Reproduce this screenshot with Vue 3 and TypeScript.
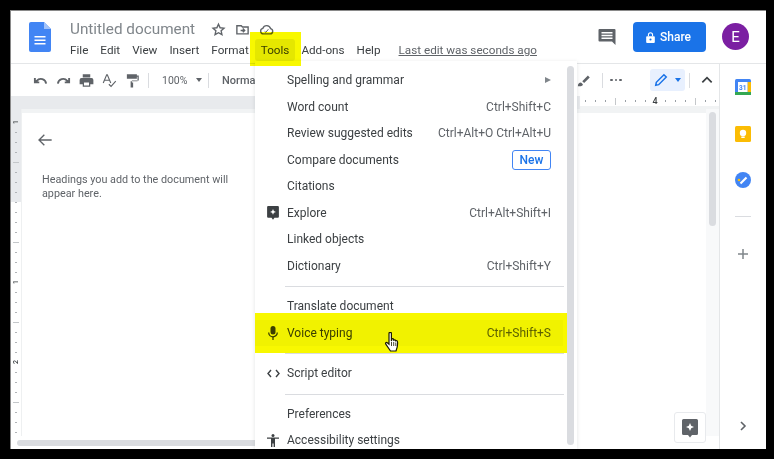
<script setup lang="ts">
interface Item { label?: string; shortcut?: string; icon?: string; badge?: string; arrow?: boolean; sep?: boolean; hover?: boolean }
const menus: string[] = ['File', 'Edit', 'View', 'Insert', 'Format', 'Tools', 'Add-ons', 'Help']
const items: Item[] = [
  { label: 'Spelling and grammar', arrow: true },
  { label: 'Word count', shortcut: 'Ctrl+Shift+C' },
  { label: 'Review suggested edits', shortcut: 'Ctrl+Alt+O Ctrl+Alt+U' },
  { label: 'Compare documents', badge: 'New' },
  { label: 'Citations' },
  { label: 'Explore', shortcut: 'Ctrl+Alt+Shift+I', icon: 'explore' },
  { label: 'Linked objects' },
  { label: 'Dictionary', shortcut: 'Ctrl+Shift+Y' },
  { sep: true },
  { label: 'Translate document' },
  { label: 'Voice typing', shortcut: 'Ctrl+Shift+S', icon: 'mic', hover: true },
  { sep: true },
  { label: 'Script editor', icon: 'code' },
  { sep: true },
  { label: 'Preferences' },
  { label: 'Accessibility settings', icon: 'access' }
]
const hTicks: number[] = Array.from({ length: 14 }, (_, i) => i)
const vTicks: number[] = Array.from({ length: 33 }, (_, i) => i)
const vLabel = (i: number): string => (i === 0 || i === 16 ? '1' : i === 24 ? '2' : '')
</script>

<template>
  <div class="frame">
    <div class="app">
      <header class="header">
        <svg class="logo" width="22" height="30" viewBox="0 0 22 30">
          <path d="M2 0h13l7 7v21a2 2 0 0 1-2 2H2a2 2 0 0 1-2-2V2a2 2 0 0 1 2-2z" fill="#4285f4" />
          <path d="M15 0l7 7h-7z" fill="#a1c2fa" />
          <path d="M5.500 14h11v1.600h-11zM5.500 17.500h11v1.600h-11zM5.500 21h11v1.600h-11z" fill="#fff" />
        </svg>
        <div class="titles">
          <div class="title-row">
            <span class="doc-title">Untitled document</span>
            <svg class="ti" width="15" height="15" viewBox="0 0 24 24" fill="none" stroke="#5f6368" stroke-width="2.200"><path d="M12 3.500l2.600 5.700 6.200.7-4.600 4.200 1.300 6.100L12 17.200l-5.500 3 1.300-6.100-4.600-4.200 6.200-.7z" /></svg>
            <svg class="ti" width="15" height="15" viewBox="0 0 24 24" fill="none" stroke="#5f6368" stroke-width="2.200"><path d="M3 6h7l2 2h9v11H3z" /><path d="M9 13.500h6M12.500 10.500l3 3-3 3" /></svg>
            <svg class="ti" width="15" height="15" viewBox="0 0 24 24" fill="none" stroke="#5f6368" stroke-width="2.200"><path d="M7 19a4.500 4.500 0 0 1-.8-8.900A6.500 6.500 0 0 1 18.500 10.500 4.300 4.300 0 0 1 18 19z" /><path d="M9 15l2 1.500 4-5" stroke-width="1.600" /></svg>
          </div>
          <nav class="menubar">
            <span v-for="m in menus" :key="m" class="mb" :class="{ active: m === 'Tools' }">{{ m }}</span>
            <a class="last-edit">Last edit was seconds ago</a>
          </nav>
        </div>
        <svg class="comment" width="18" height="18" viewBox="0 0 18 18"><path d="M1.500 1h15a1 1 0 0 1 1 1v15l-3.500-3.500H1.500a1 1 0 0 1-1-1V2a1 1 0 0 1 1-1z" fill="#5f6368" /><path d="M3.500 4h11v1.500h-11zM3.500 6.800h11v1.500h-11zM3.500 9.600h11v1.500h-11z" fill="#fff" /></svg>
        <button class="share">
          <svg width="9" height="11" viewBox="0 0 10 12"><path d="M1.200 4.500h7.600a1 1 0 0 1 1 1V11a1 1 0 0 1-1 1H1.200a1 1 0 0 1-1-1V5.500a1 1 0 0 1 1-1z" fill="#fff" /><path d="M2.700 4.500V3a2.300 2.300 0 0 1 4.600 0v1.500" fill="none" stroke="#fff" stroke-width="1.200" /><circle cx="5" cy="8.200" r="1.200" fill="#1a73e8" /></svg>
          <span>Share</span>
        </button>
        <div class="avatar">E</div>
      </header>

      <div class="body">
        <div class="main">
          <div class="toolbar">
            <svg class="tb" width="15" height="15" viewBox="0 0 24 24" fill="none" stroke="#5f6368" stroke-width="3"><path d="M21 17a8.500 8.500 0 0 0-15-4.500L3 15M3 8v7h7" /></svg>
            <svg class="tb" width="15" height="15" viewBox="0 0 24 24" fill="none" stroke="#5f6368" stroke-width="3"><path d="M3 17a8.500 8.500 0 0 1 15-4.500l3 2.500M21 8v7h-7" /></svg>
            <svg class="tb" width="15" height="15" viewBox="0 0 24 24" fill="#5f6368"><path d="M6 2h12v5H6zM4 8h16a3 3 0 0 1 3 3v7h-5v4H6v-4H1v-7a3 3 0 0 1 3-3zm4 7v5h8v-5z" /></svg>
            <svg class="tb" width="15" height="15" viewBox="0 0 24 24" fill="none" stroke="#5f6368" stroke-width="1.800"><path d="M2 16L7.500 3h1L14 16M4 11.500h8" /><path d="M11 18l3.500 3.500L22 13" /></svg>
            <svg class="tb" width="15" height="15" viewBox="0 0 24 24" fill="#5f6368"><path d="M3 2h16v7H3zM19 4h3v8H11v3h2v8H9v-10h11V6h-1z" /></svg>
            <i class="tsep"></i>
            <span class="zoom">100%</span>
            <i class="caret"></i>
            <i class="tsep"></i>
            <span class="style">Normal</span>
            <div class="tool-right">
              <svg width="15" height="15" viewBox="0 0 24 24" fill="#5f6368"><path d="M3 21c0-4 2-6 5-6l3 3c0 3-4 4-8 3zM10 13l9-9 3 3-9 9z" /></svg>
              <i class="tsep tsep2"></i>
              <span class="dots"><b></b><b></b><b></b></span>
              <span class="edit-mode">
                <svg width="14" height="14" viewBox="0 0 24 24" fill="none" stroke="#1a73e8" stroke-width="2.600"><path d="M3 21l1-5L17 3l4 4L8 20z" /></svg>
                <i class="caret blue"></i>
              </span>
              <i class="tsep tsep3"></i>
              <svg width="14" height="14" viewBox="0 0 24 24" fill="none" stroke="#3c4043" stroke-width="3"><path d="M4 16l8-8 8 8" /></svg>
            </div>
          </div>
          <div class="ruler">
            <div class="ruler-left"></div>
            <div class="ruler-ticks">
              <span v-for="t in hTicks" :key="t" class="rcell">
                <b v-if="t === 7" class="rnum">4</b>
                <i v-else class="rt" :class="{ tall: t === 3 || t === 11 }"></i>
              </span>
            </div>
          </div>
          <div class="work">
            <div class="vruler">
              <span v-for="t in vTicks" :key="t" class="vcell">
                <b v-if="vLabel(t)" class="vnum">{{ vLabel(t) }}</b>
                <i v-else class="vt" :class="{ mid: t % 8 === 4 }"></i>
              </span>
            </div>
            <div class="page-wrap">
              <div class="page">
                <svg class="back" width="16" height="16" viewBox="0 0 24 24" fill="none" stroke="#5f6368" stroke-width="2"><path d="M22 12H3M11 4l-8 8 8 8" /></svg>
                <p class="outline">Headings you add to the document will appear here.</p>
              </div>
              <button class="float-btn">
                <svg width="16" height="19" viewBox="0 0 16 19"><path d="M1.500 0h13A1.500 1.500 0 0 1 16 1.500v13a1.500 1.500 0 0 1-1.500 1.500H10l-2 2.500L6 16H1.500A1.500 1.500 0 0 1 0 14.500v-13A1.500 1.500 0 0 1 1.500 0z" fill="#5f6368" /><path d="M8 4l1.200 2.800L12 8 9.200 9.200 8 12 6.800 9.200 4 8l2.800-1.200z" fill="#fff" /></svg>
              </button>
              <div class="vscroll"><i></i></div>
            </div>
          </div>
          <div class="hscroll"><i></i></div>
        </div>

        <aside class="side">
          <svg class="sicon" width="16" height="16" viewBox="0 0 16 16">
            <rect width="16" height="16" rx="1.500" fill="#4285f4" />
            <rect x="12.500" y="3" width="3.500" height="10" fill="#fbbc04" />
            <rect y="13" width="16" height="3" fill="#34a853" />
            <rect x="3" y="3" width="9.500" height="10" fill="#fff" />
            <text x="7.700" y="11" class="cal">31</text>
          </svg>
          <svg class="sicon" width="16" height="16" viewBox="0 0 16 16">
            <rect width="16" height="16" rx="1.500" fill="#fbbc04" />
            <circle cx="8" cy="7" r="3.200" fill="#fff" />
            <rect x="6.300" y="10.500" width="3.400" height="1.500" fill="#fff" />
          </svg>
          <svg class="sicon" width="16" height="16" viewBox="0 0 16 16">
            <circle cx="8" cy="8" r="8" fill="#4285f4" />
            <path d="M5.500 11.500l6-6" stroke="#fff" stroke-width="2.200" />
            <circle cx="4" cy="8" r="1.300" fill="#fbbc04" />
          </svg>
          <i class="side-sep"></i>
          <svg class="plus" width="12" height="12" viewBox="0 0 12 12"><path d="M6 1v10M1 6h10" stroke="#80868b" stroke-width="1.500" /></svg>
          <svg class="chev" width="8" height="10" viewBox="0 0 8 10" fill="none" stroke="#5f6368" stroke-width="1.600"><path d="M2 1l4 4-4 4" /></svg>
        </aside>
      </div>

      <div class="menu">
        <template v-for="(it, i) in items" :key="i">
          <div v-if="it.sep" class="msep"></div>
          <div v-else class="mi" :class="{ hover: it.hover }">
            <span class="mi-icon">
              <svg v-if="it.icon === 'explore'" width="12" height="14" viewBox="0 0 16 19"><path d="M1.500 0h13A1.500 1.500 0 0 1 16 1.500v13a1.500 1.500 0 0 1-1.500 1.500H10l-2 2.500L6 16H1.500A1.500 1.500 0 0 1 0 14.500v-13A1.500 1.500 0 0 1 1.500 0z" fill="#3c4043" /><path d="M8 4l1.200 2.800L12 8 9.200 9.200 8 12 6.800 9.200 4 8l2.800-1.200z" fill="#fff" /></svg>
              <svg v-else-if="it.icon === 'mic'" width="10" height="14" viewBox="0 0 10 14"><rect x="2.500" y="0" width="5" height="8.500" rx="2.500" fill="#3c4043" /><path d="M.7 6.500a4.300 4.300 0 0 0 8.600 0" fill="none" stroke="#3c4043" stroke-width="1.300" /><path d="M5 10.500V14" stroke="#3c4043" stroke-width="1.300" /></svg>
              <svg v-else-if="it.icon === 'code'" width="13" height="9" viewBox="0 0 13 9" fill="none" stroke="#3c4043" stroke-width="1.400"><path d="M4 1L1 4.500 4 8M9 1l3 3.500L9 8" /></svg>
              <svg v-else-if="it.icon === 'access'" width="12" height="13" viewBox="0 0 12 13" fill="#3c4043"><circle cx="6" cy="1.500" r="1.500" /><path d="M0 3.500h12v1.300H8V13H6.600V9.500H5.400V13H4V4.800H0z" /></svg>
            </span>
            <span class="mi-label">{{ it.label }}</span>
            <span v-if="it.shortcut" class="mi-short">{{ it.shortcut }}</span>
            <span v-if="it.badge" class="badge">{{ it.badge }}</span>
            <i v-if="it.arrow" class="arrow"></i>
          </div>
        </template>
        <div class="mscroll"></div>
      </div>

      <div class="hl hl-tools"></div>
      <div class="hl hl-voice"></div>
      <svg class="cursor" width="16" height="21" viewBox="0 0 16 21">
        <path d="M5 1.500a1.200 1.200 0 0 1 2.400 0V9l.6-2.200c1-.4 1.600 0 1.700.8l.1.600c.9-.6 1.600-.3 1.800.6.900-.5 1.800-.1 1.900.9.300 3-.2 6.300-1.500 9.300H6.500L1.800 12.200c-.8-1.300.5-2.200 1.500-1.400L5 12.200z" fill="#fff" stroke="#1a1a00" stroke-width="1.200" />
        <path d="M7.500 10v4M9.700 10v4M11.800 10.500V14" stroke="#1a1a00" stroke-width=".8" />
      </svg>
    </div>
  </div>
</template>

<style scoped>
.frame {
  width: 774px;
  height: 459px;
  box-sizing: border-box;
  background: #000;
  padding: 10px 8px 10px 10px;
  overflow: hidden;
  font-family: Roboto, "Liberation Sans", sans-serif;
}
.app {
  position: relative;
  width: 756px;
  height: 439px;
  box-sizing: border-box;
  background: #fff;
  border: 1px solid #8a8a8a;
  border-width: 1px 0 0 1px;
  display: flex;
  flex-direction: column;
  overflow: hidden;
}
.header {
  height: 52px;
  flex: none;
  display: flex;
  align-items: flex-start;
  border-bottom: 1px solid #e4e6e8;
  box-sizing: content-box;
}
.logo { margin: 11px 0 0 18px; flex: none; }
.titles { margin-left: 19px; flex: none; width: 528px; }
.title-row {
  display: flex;
  align-items: center;
  height: 24px;
  margin-top: 6px;
}
.doc-title {
  font-size: 15.300px;
  color: #80868b;
  width: 131px;
  margin-right: 10px;
}
.ti { margin-right: 9px; flex: none; }
.menubar {
  display: flex;
  align-items: center;
  font-size: 11.700px;
  color: #3c4043;
  height: 22px;
  margin-top: -2px;
}
.mb { margin-right: 12px; white-space: nowrap; }
.mb.active {
  background: #eceef0;
  padding: 0 6px;
  margin: 0 6px 0 -6px;
  align-self: stretch;
  line-height: 22px;
  border-radius: 3px;
}
.last-edit {
  color: #5f6368;
  text-decoration: underline;
  margin-left: 6px;
  white-space: nowrap;
}
.comment { margin: 17px 0 0 0; flex: none; }
.share {
  margin: 11px 0 0 17px;
  width: 73px;
  height: 30px;
  background: #1a73e8;
  border: 0;
  border-radius: 4px;
  color: #fff;
  font: 500 12px Roboto, sans-serif;
  display: flex;
  align-items: center;
  justify-content: center;
  gap: 5px;
  padding: 0 2px 0 0;
  flex: none;
}
.avatar {
  margin: 12px 0 0 16px;
  width: 27px;
  height: 27px;
  border-radius: 50%;
  background: #7b1fa2;
  color: #fff;
  font-size: 15px;
  display: flex;
  align-items: center;
  justify-content: center;
  flex: none;
}
.body { flex: 1; display: flex; min-height: 0; }
.main {
  width: 708px;
  flex: none;
  background: #f1f3f4;
  display: flex;
  flex-direction: column;
  min-height: 0;
}
.toolbar {
  height: 32px;
  flex: none;
  background: #fff;
  display: flex;
  align-items: center;
  padding: 0 3px 0 22px;
  box-sizing: border-box;
}
.tb { margin-right: 8px; flex: none; }
.tsep { width: 1px; height: 15px; background: #dadce0; flex: none; margin: 0 13px 0 0; }
.zoom { font-size: 10.500px; color: #5f6368; width: 29px; }
.caret {
  width: 0;
  height: 0;
  border: 3.500px solid transparent;
  border-top: 4px solid #5f6368;
  border-bottom: 0;
  margin: 0 6px 0 5px;
  flex: none;
}
.caret.blue { border-top-color: #1a73e8; margin: 0 0 0 7px; }
.style { font-size: 11px; font-weight: 500; color: #5f6368; }
.tool-right {
  margin-left: auto;
  display: flex;
  align-items: center;
  height: 32px;
  width: 140px;
}
.tsep2 { margin: 0 7px 0 11px; }
.dots { display: flex; gap: 2px; width: 12px; margin-right: 28px; }
.dots b { width: 2.500px; height: 2.500px; border-radius: 50%; background: #5f6368; }
.edit-mode {
  width: 35px;
  height: 22px;
  background: #e8f0fe;
  border-radius: 3px;
  display: flex;
  align-items: center;
  justify-content: center;
  flex: none;
}
.tsep3 { margin: 0 10px 0 4px; }
.ruler {
  height: 13px;
  flex: none;
  display: flex;
}
.ruler-left { flex: 1; background: #e8eaed; }
.ruler-ticks {
  width: 139px;
  flex: none;
  height: 13px;
  box-sizing: border-box;
  background: #fff;
  border-bottom: 3px solid #f1f3f4;
  display: flex;
  align-items: center;
  margin-left: -1px;
}
.rcell { width: 10px; flex: none; display: flex; justify-content: center; align-items: center; height: 10px; }
.rt { width: 1px; height: 2px; background: #9aa0a6; }
.rt.tall { height: 7px; background: #c4c7ca; }
.rnum { font-size: 9px; color: #3c4043; font-weight: 500; line-height: 10px; }
.work { flex: 1; display: flex; min-height: 0; }
.vruler {
  width: 11px;
  flex: none;
  display: flex;
  flex-direction: column;
  box-sizing: border-box;
  padding-top: 8px;
  background: linear-gradient(#e8eaed 93px, #fff 93px);
  border-right: 1px solid #eef0f1;
  overflow: hidden;
}
.vcell { height: 10px; flex: none; display: flex; align-items: center; justify-content: center; }
.vnum { font-size: 7px; font-weight: 500; transform: rotate(-90deg); color: #3c4043; line-height: 10px; }
.vt { width: 2px; height: 1px; background: #b0b3b7; }
.vt.mid { width: 6px; background: #c4c7ca; }
.page-wrap {
  flex: 1;
  position: relative;
  display: flex;
  min-width: 0;
  padding-top: 4px;
  background: #f1f3f4;
}
.page {
  flex: 1;
  background: #fff;
  box-sizing: border-box;
  padding: 19px 0 0 20px;
  min-width: 0;
}
.back { display: block; margin-left: -5px; }
.outline {
  margin: 25px 0 0;
  width: 200px;
  font-size: 10.800px;
  line-height: 14px;
  color: #5f6368;
}
.float-btn {
  position: absolute;
  right: 13px;
  top: 303px;
  width: 32px;
  height: 31px;
  background: #fff;
  border: 1px solid #e8eaed;
  border-radius: 3px;
  display: flex;
  align-items: center;
  justify-content: center;
  padding: 2px 0 0;
}
.vscroll { width: 13px; flex: none; background: #f8f9fa; box-sizing: border-box; padding: 3px 3px 0; margin-top: -4px; }
.vscroll i { display: block; width: 7px; height: 114px; border-radius: 4px; background: #dadce0; }
.hscroll {
  height: 13px;
  flex: none;
  background: #fff;
  padding: 4px 0 0 6px;
  box-sizing: border-box;
}
.hscroll i { display: block; height: 6px; width: 320px; border-radius: 3px; background: #dadce0; }
.side {
  flex: 1;
  border-left: 1px solid #e4e6e8;
  display: flex;
  flex-direction: column;
  align-items: center;
  padding-top: 15px;
  background: #fff;
}
.sicon { flex: none; margin-bottom: 30.500px; }
.cal { font: 700 6.500px Roboto, sans-serif; fill: #4285f4; text-anchor: middle; }
.side-sep { width: 16px; height: 1px; background: #dadce0; margin-top: -3px; flex: none; }
.plus { margin-top: 31px; flex: none; }
.chev { margin-top: 161px; flex: none; }
.menu {
  position: absolute;
  left: 244px;
  top: 50px;
  width: 322px;
  height: 388px;
  background: #fff;
  box-shadow: 0 1px 4px rgba(60, 64, 67, .15);
  box-sizing: border-box;
  padding-top: 6px;
  overflow: hidden;
}
.mi {
  height: 26.500px;
  display: flex;
  align-items: center;
  font-size: 12px;
  color: #3c4043;
  padding-right: 26px;
  position: relative;
}
.mi.hover { background: #f8f9fa; margin-right: 14px; padding-right: 12px; }
.mi-icon {
  width: 32px;
  flex: none;
  display: flex;
  justify-content: center;
  padding-left: 4px;
  box-sizing: border-box;
}
.mi-label { flex: 1; white-space: nowrap; }
.mi-short { color: #5f6368; white-space: nowrap; }
.badge {
  border: 1px solid #4285f4;
  border-radius: 3px;
  color: #1a73e8;
  font-weight: 500;
  font-size: 12px;
  width: 39px;
  height: 20px;
  box-sizing: border-box;
  display: flex;
  align-items: center;
  justify-content: center;
}
.arrow {
  width: 0;
  height: 0;
  border: 3px solid transparent;
  border-left: 6px solid #80868b;
  border-right: 0;
}
.msep { height: 1px; background: #dadce0; margin: 7px 13px 6px 30px; }
.mscroll {
  position: absolute;
  right: 3px;
  top: 5px;
  bottom: 4px;
  width: 7px;
  border-radius: 4px;
  background: #dadce0;
}
.hl { position: absolute; background: #f8f800; mix-blend-mode: multiply; }
.hl-tools { left: 239px; top: 21px; width: 51px; height: 34px; }
.hl-voice { left: 244px; top: 302px; width: 312px; height: 40px; }
.cursor { position: absolute; left: 373px; top: 321px; }
</style>

<style>
html, body { margin: 0; background: #000; overflow: hidden; }
</style>
